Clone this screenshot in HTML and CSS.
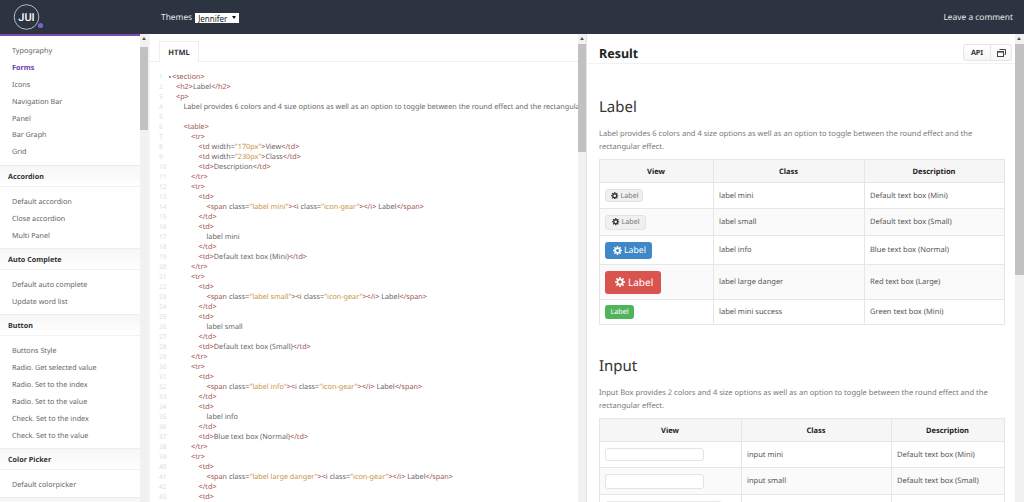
FILE: index.html
```html
<!DOCTYPE html>
<html lang="en">
<head>
<meta charset="utf-8">
<title>JUI Forms</title>
<link rel="stylesheet" href="styles.css">
</head>
<body>
<svg class="defs" width="0" height="0"><symbol id="gear" viewBox="0 0 16 16"><circle cx="8" cy="8" r="4.2" fill="none" stroke="currentColor" stroke-width="3"/><path d="M8 0v3M8 13v3M0 8h3M13 8h3M2.3 2.3l2.1 2.1M11.6 11.6l2.1 2.1M2.3 13.7l2.1-2.1M11.6 4.4l2.1-2.1" stroke="currentColor" stroke-width="2.6" fill="none"/></symbol></svg>
<header class="topbar">
  <div class="logo">
    <svg width="32" height="30" viewBox="0 0 32 30"><circle cx="14.5" cy="15" r="12.3" fill="none" stroke="#d9dce0" stroke-width="0.8"/><circle cx="28.5" cy="23.5" r="2.6" fill="#7d62c0"/><text x="14.5" y="19" text-anchor="middle" class="logo-text">JUI</text></svg>
  </div>
  <div class="themes">Themes <span class="select-wrap"><select class="theme-select"><option>Jennifer</option></select></span></div>
  <a class="comment">Leave a comment</a>
</header>
<main class="panes">
  <div class="side-pane">
    <nav class="sidebar">
      <ul class="menu">
        <li>Typography</li><li class="active">Forms</li><li>Icons</li><li>Navigation Bar</li><li>Panel</li><li>Bar Graph</li><li>Grid</li>
      </ul>
      <h3 class="group">Accordion</h3>
      <ul class="menu">
        <li>Default accordion</li><li>Close accordion</li><li>Multi Panel</li>
      </ul>
      <h3 class="group">Auto Complete</h3>
      <ul class="menu">
        <li>Default auto complete</li><li>Update word list</li>
      </ul>
      <h3 class="group">Button</h3>
      <ul class="menu">
        <li>Buttons Style</li><li>Radio. Get selected value</li><li>Radio. Set to the index</li><li>Radio. Set to the value</li><li>Check. Set to the index</li><li>Check. Set to the value</li>
      </ul>
      <h3 class="group">Color Picker</h3>
      <ul class="menu">
        <li>Default colorpicker</li>
      </ul>
      <div class="group"></div>
    </nav>
    <div class="scrollbar"><span class="arrow arrow-side"></span><span class="thumb thumb-side"></span></div>
  </div>
  <section class="code-pane">
    <div class="code-main">
      <div class="tabs"><span class="tab">HTML</span></div>
      <div class="code">
<div class="ln"><i>1</i><code class="l0"><span class="fold"></span><u>&lt;section&gt;</u></code></div>
<div class="ln"><i>2</i><code class="l1"><u>&lt;h2&gt;</u>Label<u>&lt;/h2&gt;</u></code></div>
<div class="ln"><i>3</i><code class="l1"><u>&lt;p&gt;</u></code></div>
<div class="ln"><i>4</i><code class="l2">Label provides 6 colors and 4 size options as well as an option to toggle between the round effect and the rectangular effect.</code></div>
<div class="ln"><i>5</i><code class="l2"></code></div>
<div class="ln"><i>6</i><code class="l2"><u>&lt;table&gt;</u></code></div>
<div class="ln"><i>7</i><code class="l3"><u>&lt;tr&gt;</u></code></div>
<div class="ln"><i>8</i><code class="l4"><u>&lt;td</u> width=<b>"170px"</b><u>&gt;</u>View<u>&lt;/td&gt;</u></code></div>
<div class="ln"><i>9</i><code class="l4"><u>&lt;td</u> width=<b>"230px"</b><u>&gt;</u>Class<u>&lt;/td&gt;</u></code></div>
<div class="ln"><i>10</i><code class="l4"><u>&lt;td&gt;</u>Description<u>&lt;/td&gt;</u></code></div>
<div class="ln"><i>11</i><code class="l3"><u>&lt;/tr&gt;</u></code></div>
<div class="ln"><i>12</i><code class="l3"><u>&lt;tr&gt;</u></code></div>
<div class="ln"><i>13</i><code class="l4"><u>&lt;td&gt;</u></code></div>
<div class="ln"><i>14</i><code class="l5"><u>&lt;span</u> class=<b>"label mini"</b><u>&gt;&lt;i</u> class=<b>"icon-gear"</b><u>&gt;&lt;/i&gt;</u> Label<u>&lt;/span&gt;</u></code></div>
<div class="ln"><i>15</i><code class="l4"><u>&lt;/td&gt;</u></code></div>
<div class="ln"><i>16</i><code class="l4"><u>&lt;td&gt;</u></code></div>
<div class="ln"><i>17</i><code class="l5">label mini</code></div>
<div class="ln"><i>18</i><code class="l4"><u>&lt;/td&gt;</u></code></div>
<div class="ln"><i>19</i><code class="l4"><u>&lt;td&gt;</u>Default text box (Mini)<u>&lt;/td&gt;</u></code></div>
<div class="ln"><i>20</i><code class="l3"><u>&lt;/tr&gt;</u></code></div>
<div class="ln"><i>21</i><code class="l3"><u>&lt;tr&gt;</u></code></div>
<div class="ln"><i>22</i><code class="l4"><u>&lt;td&gt;</u></code></div>
<div class="ln"><i>23</i><code class="l5"><u>&lt;span</u> class=<b>"label small"</b><u>&gt;&lt;i</u> class=<b>"icon-gear"</b><u>&gt;&lt;/i&gt;</u> Label<u>&lt;/span&gt;</u></code></div>
<div class="ln"><i>24</i><code class="l4"><u>&lt;/td&gt;</u></code></div>
<div class="ln"><i>25</i><code class="l4"><u>&lt;td&gt;</u></code></div>
<div class="ln"><i>26</i><code class="l5">label small</code></div>
<div class="ln"><i>27</i><code class="l4"><u>&lt;/td&gt;</u></code></div>
<div class="ln"><i>28</i><code class="l4"><u>&lt;td&gt;</u>Default text box (Small)<u>&lt;/td&gt;</u></code></div>
<div class="ln"><i>29</i><code class="l3"><u>&lt;/tr&gt;</u></code></div>
<div class="ln"><i>30</i><code class="l3"><u>&lt;tr&gt;</u></code></div>
<div class="ln"><i>31</i><code class="l4"><u>&lt;td&gt;</u></code></div>
<div class="ln"><i>32</i><code class="l5"><u>&lt;span</u> class=<b>"label info"</b><u>&gt;&lt;i</u> class=<b>"icon-gear"</b><u>&gt;&lt;/i&gt;</u> Label<u>&lt;/span&gt;</u></code></div>
<div class="ln"><i>33</i><code class="l4"><u>&lt;/td&gt;</u></code></div>
<div class="ln"><i>34</i><code class="l4"><u>&lt;td&gt;</u></code></div>
<div class="ln"><i>35</i><code class="l5">label info</code></div>
<div class="ln"><i>36</i><code class="l4"><u>&lt;/td&gt;</u></code></div>
<div class="ln"><i>37</i><code class="l4"><u>&lt;td&gt;</u>Blue text box (Normal)<u>&lt;/td&gt;</u></code></div>
<div class="ln"><i>38</i><code class="l3"><u>&lt;/tr&gt;</u></code></div>
<div class="ln"><i>39</i><code class="l3"><u>&lt;tr&gt;</u></code></div>
<div class="ln"><i>40</i><code class="l4"><u>&lt;td&gt;</u></code></div>
<div class="ln"><i>41</i><code class="l5"><u>&lt;span</u> class=<b>"label large danger"</b><u>&gt;&lt;i</u> class=<b>"icon-gear"</b><u>&gt;&lt;/i&gt;</u> Label<u>&lt;/span&gt;</u></code></div>
<div class="ln"><i>42</i><code class="l4"><u>&lt;/td&gt;</u></code></div>
<div class="ln"><i>43</i><code class="l4"><u>&lt;td&gt;</u></code></div>
      </div>
    </div>
    <div class="scrollbar"><span class="arrow"></span><span class="thumb thumb-code"></span></div>
  </section>
  <section class="result-pane">
    <div class="result-main">
      <div class="result-head">
        <h1>Result</h1>
        <div class="btn-group">
          <span class="btn btn-api">API</span>
          <span class="btn btn-icon"><svg width="9" height="8" viewBox="0 0 9 8"><path d="M2.5 .5h6v5h-1" fill="none" stroke="#444" stroke-width="1"/><rect x=".5" y="2.5" width="6" height="5" fill="none" stroke="#444" stroke-width="1"/><rect x=".5" y="2" width="6" height="1.6" fill="#444"/></svg></span>
        </div>
      </div>
      <div class="result-body">
        <h2>Label</h2>
        <p>Label provides 6 colors and 4 size options as well as an option to toggle between the round effect and the rectangular effect.</p>
        <table class="tbl tbl-label">
          <thead><tr><th class="c1">View</th><th class="c2">Class</th><th>Description</th></tr></thead>
          <tbody>
            <tr class="r-mini"><td><span class="lab lab-mini"><svg class="gear"><use href="#gear"/></svg>Label</span></td><td>label mini</td><td>Default text box (Mini)</td></tr>
            <tr class="r-small"><td><span class="lab lab-small"><svg class="gear"><use href="#gear"/></svg>Label</span></td><td>label small</td><td>Default text box (Small)</td></tr>
            <tr class="r-info"><td><span class="lab lab-info"><svg class="gear"><use href="#gear"/></svg>Label</span></td><td>label info</td><td>Blue text box (Normal)</td></tr>
            <tr class="r-large"><td><span class="lab lab-danger"><svg class="gear"><use href="#gear"/></svg>Label</span></td><td>label large danger</td><td>Red text box (Large)</td></tr>
            <tr class="r-success"><td><span class="lab lab-success">Label</span></td><td>label mini success</td><td>Green text box (Mini)</td></tr>
          </tbody>
        </table>
        <h2 class="second">Input</h2>
        <p>Input Box provides 2 colors and 4 size options as well as an option to toggle between the round effect and the rectangular effect.</p>
        <table class="tbl tbl-input">
          <thead><tr><th class="c1">View</th><th class="c2">Class</th><th>Description</th></tr></thead>
          <tbody>
            <tr class="r-imini"><td><span class="inp inp-mini"></span></td><td>input mini</td><td>Default text box (Mini)</td></tr>
            <tr class="r-ismall"><td><span class="inp inp-small"></span></td><td>input small</td><td>Default text box (Small)</td></tr>
            <tr class="r-inormal"><td><span class="inp inp-normal"></span></td><td></td><td></td></tr>
          </tbody>
        </table>
      </div>
    </div>
    <div class="scrollbar scrollbar-wide"><span class="arrow"></span><span class="thumb thumb-result"></span></div>
  </section>
</main>
</body>
</html>
```
FILE: styles.css
```css
* { box-sizing: border-box; }
html, body { margin: 0; height: 100%; overflow: hidden; }
body { display: flex; flex-direction: column; font-family: "Noto Sans", "Open Sans", sans-serif; font-size: 7.2px; color: #555; background: #fff; text-rendering: geometricPrecision; }
.defs { display: block; height: 0; }

.topbar { flex: none; height: 34px; background: #2b3440; display: flex; align-items: center; color: #e8eaec; }
.logo { width: 161px; padding-left: 12px; display: flex; }
.logo-text { font: 500 11px Roboto, sans-serif; fill: #fff; }
.themes { font-size: 8.4px; display: flex; align-items: center; gap: 3px; flex: 1; }
.select-wrap { position: relative; display: block; width: 44px; height: 10px; margin-top: 2px; background: #fff; }
.select-wrap::after { content: ""; position: absolute; right: 3px; top: 3px; border: 2.2px solid transparent; border-bottom: 0; border-top: 3.5px solid #111; }
.theme-select { display: block; appearance: none; width: 100%; height: 100%; font: 8px "Noto Sans", sans-serif; padding: 0 0 0 3px; border: 0; background: transparent; color: #222; border-radius: 0; }
.comment { font-size: 8.4px; padding-right: 11px; color: #e8eaec; }

.panes { flex: 1; display: flex; min-height: 0; }
.side-pane { width: 150px; flex: none; display: flex; border-right: 2px solid #f4f4f4; overflow: hidden; }
.sidebar { width: 140px; flex: none; border-top: 2px solid #7a4cb0; }
.menu { list-style: none; margin: 0; padding: 6px 0 4.5px 12px; }
.menu li { height: 16.9px; line-height: 19px; white-space: nowrap; color: #666; }
.menu li.active { color: #6d3aa6; font-weight: 700; }
.group { margin: 0; height: 22px; line-height: 23px; padding-left: 8px; font-size: 7.2px; font-weight: 700; color: #333; background: linear-gradient(#f6f6f6, #fff); border-top: 1px solid #ececec; border-bottom: 1px solid #f2f2f2; }

.scrollbar { flex: none; width: 8px; background: #f1f1f1; display: flex; flex-direction: column; }
.scrollbar-wide { width: 9px; }
.arrow { flex: none; height: 10px; position: relative; }
.arrow-side { height: 13px; }
.arrow::after { content: ""; position: absolute; left: 2px; top: 3px; border: 2px solid transparent; border-top: 0; border-bottom: 3px solid #555; }
.thumb { background: #c1c1c1; display: block; }
.thumb-side { height: 83px; }
.thumb-code { height: 108px; }
.thumb-result { height: 231px; }

.code-pane { width: 437px; flex: none; display: flex; border-right: 1px solid #e4e4e4; min-width: 0; }
.code-main { flex: 1; min-width: 0; overflow: hidden; }
.tabs { height: 28px; padding: 7px 0 0 9px; border-bottom: 1px solid #eee; display: flex; }
.tab { width: 40px; height: 21px; border: 1px solid #eee; border-bottom: 0; background: #fff; font-weight: 700; font-size: 7.5px; color: #333; text-align: center; line-height: 23px; }
.code { padding-top: 9px; }
.ln { display: flex; height: 10px; line-height: 12px; font-size: 7.24px; white-space: nowrap; color: #666; }
.ln i { width: 15.5px; flex: none; padding-left: 9px; font-style: normal; color: #dcdcdc; font-size: 6.5px; }
.ln code { font: inherit; }
.ln u { text-decoration: none; color: #a0564f; }
.ln b { font-weight: 400; color: #c9943f; }
.fold { display: inline-block; width: 2px; height: 2px; margin: 0 1.5px 1.5px -3.5px; border-radius: 50%; background: #777; }
.l0 { padding-left: 6.5px; }
.l1 { padding-left: 10.5px; }
.l2 { padding-left: 18px; }
.l3 { padding-left: 25.5px; }
.l4 { padding-left: 33px; }
.l5 { padding-left: 41px; }

.result-pane { flex: 1; display: flex; min-width: 0; }
.result-main { flex: 1; min-width: 0; overflow: hidden; }
.result-head { height: 30px; padding: 10px 3px 0 12px; border-bottom: 1px solid #f2f2f2; display: flex; justify-content: space-between; align-items: flex-start; }
.result-head h1 { margin: 0; font-size: 12.5px; line-height: 19px; font-weight: 700; color: #222; }
.btn-group { display: flex; height: 17px; border: 1px solid #e6e6e6; border-radius: 3px; background: linear-gradient(#fff, #f6f6f6); }
.btn { display: flex; align-items: center; justify-content: center; font-size: 7.2px; font-weight: 700; color: #333; }
.btn-api { width: 27px; border-right: 1px solid #e6e6e6; }
.btn-icon { width: 20px; }
.result-body { padding: 0 10px 0 12px; }
.result-body h2 { margin: 33px 0 0; font-size: 15px; font-weight: 400; line-height: 20px; color: #333; }
.result-body h2.second { margin-top: 31px; }
.result-body p { margin: 11px 0 5px; font-size: 7.55px; line-height: 13px; color: #777; }
.tbl { width: 406px; border-collapse: collapse; table-layout: fixed; font-size: 7.5px; color: #555; }
.tbl th, .tbl td { border: 1px solid #e6e6e6; padding: 0 6px 0 5px; }
.tbl th { height: 23px; padding-top: 2px; background: #f6f6f6; font-weight: 700; color: #222; text-align: center; font-size: 7.5px; }
.tbl tbody tr:nth-child(even) { background: #fafafa; }
.tbl-label .c1 { width: 114px; }
.tbl-label .c2 { width: 151px; }
.tbl-input .c1 { width: 142px; }
.tbl-input .c2 { width: 150px; }
.r-mini { height: 26px; }
.r-small { height: 27px; }
.r-info { height: 29px; }
.r-large { height: 35px; }
.r-success { height: 25px; }
.r-imini { height: 26px; }
.r-ismall { height: 27px; }
.r-inormal { height: 30px; }

.lab { display: inline-flex; align-items: center; border-radius: 3px; vertical-align: middle; }
.gear { width: 7.5px; height: 7.5px; color: #333; flex: none; margin-right: 2px; }
.lab-mini { width: 38px; height: 13px; padding-left: 5px; background: #f0f0f0; border: 1px solid #e2e2e2; color: #777; font-size: 7.2px; }
.lab-small { width: 41px; height: 15px; padding-left: 6px; background: #f0f0f0; border: 1px solid #e2e2e2; color: #777; font-size: 7.2px; }
.lab-info { width: 47px; height: 17px; padding-left: 8px; background: #3f87c7; color: #fff; font-size: 8.7px; }
.lab-info .gear { color: #fff; width: 9px; height: 9px; }
.lab-danger { width: 56px; height: 23px; padding-left: 10px; background: #d9534f; color: #fff; font-size: 10px; }
.lab-danger .gear { color: #fff; width: 10px; height: 10px; margin-right: 3px; }
.lab-success { width: 29px; height: 14px; justify-content: center; background: #52b45a; color: #fff; font-size: 7.2px; }

.inp { display: block; border: 1px solid #e4e4e4; border-radius: 3px; background: #fff; }
.inp-mini { width: 99px; height: 13px; }
.inp-small { width: 99px; height: 15px; }
.inp-normal { width: 117px; height: 17px; }
```
